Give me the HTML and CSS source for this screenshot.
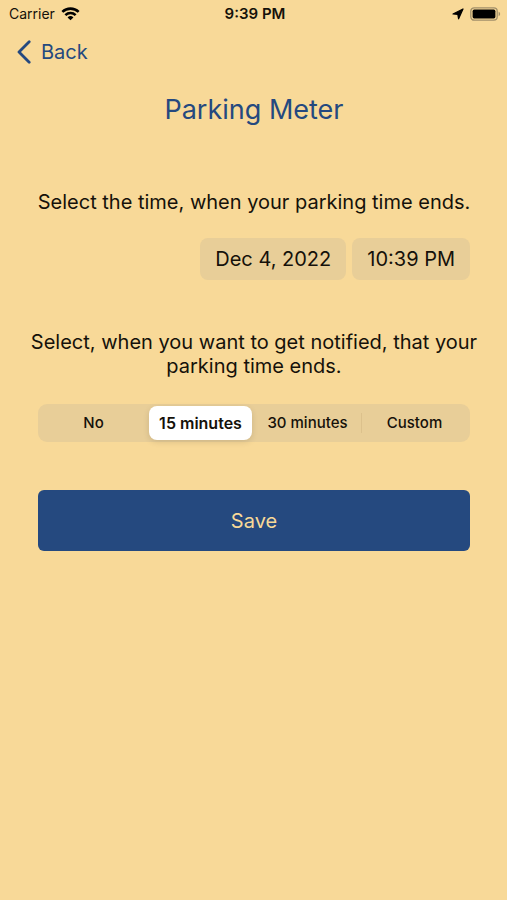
FILE: index.html
```html
<!DOCTYPE html>
<html lang="en">
<head>
<meta charset="utf-8">
<meta name="viewport" content="width=device-width, initial-scale=1">
<title>Parking Meter</title>
<link rel="stylesheet" href="styles.css">
</head>
<body>
<header class="status">
  <div class="status-left">
    <span>Carrier</span>
    <svg class="wifi" viewBox="0 0 20 14" aria-hidden="true">
      <path d="M1.4 4.800a12.400 12.400 0 0 1 17.200 0M4.600 8.200a7.800 7.800 0 0 1 10.800 0" fill="none" stroke="currentColor" stroke-width="2.700"/>
      <path d="M10 13.600 6.900 10.600a4.500 4.500 0 0 1 6.200 0z" fill="currentColor"/>
    </svg>
  </div>
  <time class="status-time">9:39 PM</time>
  <div class="status-right">
    <svg class="location" viewBox="0 0 12 12" aria-hidden="true">
      <path d="M11 1 6.600 10.800 5.800 6.300 1 6z" fill="currentColor" stroke="currentColor" stroke-width="1.200" stroke-linejoin="round"/>
    </svg>
    <svg class="battery" viewBox="0 0 31 14" aria-hidden="true">
      <rect x=".8" y=".8" width="26.4" height="12.4" rx="3.4" fill="none" stroke="#a18f69" stroke-width="1.3"/>
      <rect x="2.6" y="2.6" width="22.8" height="8.8" rx="1.6" fill="#000"/>
      <path d="M28.6 4.8c2 .7 2 3.7 0 4.4z" fill="#a18f69"/>
    </svg>
  </div>
</header>
<nav class="nav">
  <a class="back" href="#">
    <svg class="chevron" viewBox="0 0 14 24" aria-hidden="true">
      <path d="M12.200 1.800 2 12l10.200 10.200" fill="none" stroke="currentColor" stroke-width="2.800" stroke-linecap="round" stroke-linejoin="round"/>
    </svg>
    <span>Back</span>
  </a>
</nav>
<main class="content">
  <h1 class="title">Parking Meter</h1>
  <p class="prompt">Select the time, when your parking time ends.</p>
  <div class="pickers">
    <button class="picker" type="button">Dec 4, 2022</button>
    <button class="picker" type="button">10:39 PM</button>
  </div>
  <p class="prompt" id="notify">Select, when you want to get notified, that your parking time ends.</p>
  <div class="segments" role="radiogroup" aria-labelledby="notify">
    <label class="segment"><input type="radio" name="notify"><span>No</span></label>
    <label class="segment"><input type="radio" name="notify" checked><span>15 minutes</span></label>
    <label class="segment"><input type="radio" name="notify"><span>30 minutes</span></label>
    <label class="segment divided"><input type="radio" name="notify"><span>Custom</span></label>
  </div>
  <button class="save" type="button">Save</button>
</main>
</body>
</html>
```
FILE: styles.css
```css
* {
  box-sizing: border-box;
}

body {
  margin: 0;
  min-height: 100vh;
  background: #f8d998;
  color: #15110a;
  font-family: Inter, "Liberation Sans", sans-serif;
  font-size: 20px;
}

button {
  border: 0;
  font: inherit;
}

.status {
  display: grid;
  grid-template-columns: 1fr auto 1fr;
  align-items: center;
  height: 28px;
  padding: 0 6px 0 9px;
  font-size: 14px;
  line-height: 20px;
}

.status-left,
.status-right {
  display: flex;
  align-items: center;
  gap: 6px;
}

.status-right {
  justify-content: flex-end;
}

.status-time {
  font-size: 15px;
  font-weight: 600;
}

.wifi {
  width: 19px;
  height: 14px;
  color: #000;
}

.location {
  width: 12px;
  height: 12px;
  color: #000;
}

.battery {
  width: 31px;
  height: 14px;
}

.nav {
  padding: 10px 17px;
}

.back {
  display: inline-flex;
  align-items: center;
  gap: 10px;
  color: #25497f;
  line-height: 28px;
  text-decoration: none;
}

.chevron {
  width: 14px;
  height: 24px;
}

.content {
  display: flex;
  flex-direction: column;
  padding: 13px 37px 0 38px;
}

.title {
  margin: 0 0 62px;
  color: #25497f;
  font-size: 27px;
  font-weight: 400;
  line-height: 36px;
  text-align: center;
}

.prompt {
  margin: 0 -8px;
  line-height: 24px;
  text-align: center;
}

.pickers {
  display: flex;
  justify-content: flex-end;
  gap: 6px;
  margin: 24px 0 50px;
}

.picker {
  height: 42px;
  padding: 0 15px;
  border-radius: 8px;
  background: #e8ce98;
  color: inherit;
}

.segments {
  display: grid;
  grid-template-columns: repeat(4, minmax(0, 1fr));
  margin: 26px 0 48px;
  padding: 2px;
  border-radius: 9px;
  background: #e8ce98;
  font-size: 15px;
  font-weight: 500;
}

.segment {
  position: relative;
  padding: 0 2px;
  line-height: 34px;
  text-align: center;
  white-space: nowrap;
}

.segment input {
  position: absolute;
  inset: 0;
  margin: 0;
  opacity: 0;
}

.segment span {
  display: block;
  border-radius: 8px;
}

.segment input:checked + span {
  background: #fff;
  box-shadow: 0 2px 6px #0000001f;
  font-size: 16px;
  font-weight: 600;
}

.divided {
  background: linear-gradient(#dcc18c, #dcc18c) left center / 1px 20px no-repeat;
}

.save {
  height: 61px;
  border-radius: 6px;
  background: #25497f;
  color: #f8d998;
}
```
